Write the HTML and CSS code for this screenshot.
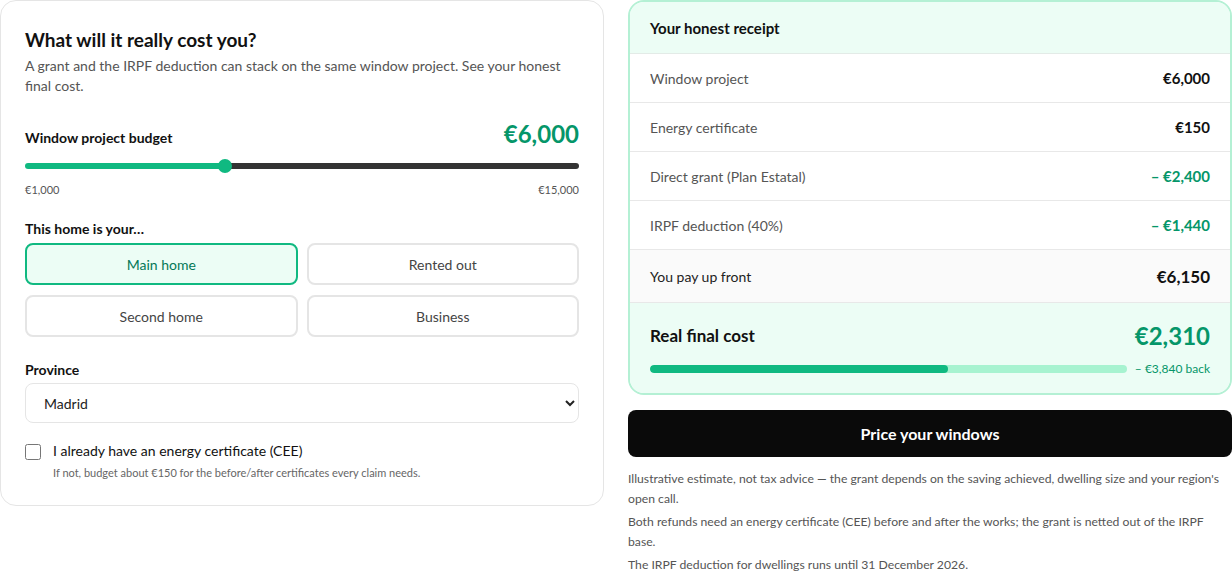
FILE: index.html
```html
<!DOCTYPE html>
<html lang="en">
<head>
    <meta charset="UTF-8">
    <meta name="viewport" content="width=device-width, initial-scale=1.0">
    <title>What will it really cost you?</title>
    <link rel="stylesheet" href="styles.css">
</head>
<body>
    <div class="calc">
        <div class="card inputs">
            <h2 class="title">What will it really cost you?</h2>
            <p class="intro">A grant and the IRPF deduction can stack on the same window project. See your honest final cost.</p>

            <div class="budget-row">
                <label for="budget" class="field-label">Window project budget</label>
                <span class="budget-value">€6,000</span>
            </div>
            <input id="budget" class="slider" type="range" min="1000" max="15000" step="100" value="6000"
                   style="background: linear-gradient(to right, #10b981 0%, #10b981 35.7%, #333 35.7%, #333 100%);">
            <div class="range-ends">
                <span>€1,000</span>
                <span>€15,000</span>
            </div>

            <p class="field-label spaced">This home is your…</p>
            <div class="options">
                <button class="option selected">Main home</button>
                <button class="option">Rented out</button>
                <button class="option">Second home</button>
                <button class="option">Business</button>
            </div>

            <label for="province" class="field-label province-label">Province</label>
            <select id="province" class="select">
                <option>Madrid</option>
                <option>Barcelona</option>
                <option>Valencia</option>
                <option>Sevilla</option>
            </select>

            <div class="check-row">
                <input id="cee" type="checkbox" class="check">
                <div>
                    <label for="cee" class="check-label">I already have an energy certificate (CEE)</label>
                    <p class="check-hint">If not, budget about €150 for the before/after certificates every claim needs.</p>
                </div>
            </div>
        </div>

        <div class="side">
            <div class="card receipt">
                <div class="receipt-head">Your honest receipt</div>
                <div class="line">
                    <span>Window project</span>
                    <span class="amount">€6,000</span>
                </div>
                <div class="line">
                    <span>Energy certificate</span>
                    <span class="amount">€150</span>
                </div>
                <div class="line">
                    <span>Direct grant (Plan Estatal)</span>
                    <span class="amount minus">– €2,400</span>
                </div>
                <div class="line">
                    <span>IRPF deduction (40%)</span>
                    <span class="amount minus">– €1,440</span>
                </div>
                <div class="line upfront">
                    <span>You pay up front</span>
                    <span class="amount">€6,150</span>
                </div>
                <div class="final">
                    <div class="final-row">
                        <span class="final-label">Real final cost</span>
                        <span class="final-value">€2,310</span>
                    </div>
                    <div class="back-row">
                        <div class="bar"><div class="bar-fill" style="width: 62.4%;"></div></div>
                        <span class="back">– €3,840 back</span>
                    </div>
                </div>
            </div>

            <button class="cta">Price your windows</button>

            <div class="notes">
                <p>Illustrative estimate, not tax advice — the grant depends on the saving achieved, dwelling size and your region's open call.</p>
                <p>Both refunds need an energy certificate (CEE) before and after the works; the grant is netted out of the IRPF base.</p>
                <p>The IRPF deduction for dwellings runs until 31 December 2026.</p>
            </div>
        </div>
    </div>
</body>
</html>
```

FILE: styles.css
```css
body {
    margin: 0;
    padding: 0;
    font-family: Lato, "Open Sans", sans-serif;
    color: #111;
    background-color: #fff;
}
.calc {
    display: grid;
    grid-template-columns: 1fr 1fr;
    gap: 24px;
    width: 1232px;
    align-items: start;
}
.card {
    border: 1px solid #e5e5e5;
    border-radius: 16px;
    background-color: #fff;
}
.inputs {
    padding: 24px 24px 24px;
}
.title {
    margin: 0 0 1px;
    font-size: 19px;
    line-height: 30px;
    font-weight: 700;
}
.intro {
    margin: 0;
    font-size: 14px;
    line-height: 20px;
    color: #555;
}
.field-label {
    font-size: 14px;
    line-height: 20px;
    font-weight: 700;
    color: #111;
    margin: 0;
}
.field-label.spaced {
    margin-top: 21px;
}
.province-label {
    display: block;
    margin-top: 23px;
}
.budget-row {
    display: flex;
    justify-content: space-between;
    align-items: baseline;
    margin-top: 22px;
    height: 32px;
}
.budget-value {
    font-size: 24px;
    line-height: 32px;
    font-weight: 700;
    color: #059669;
}
.slider {
    -webkit-appearance: none;
    appearance: none;
    display: block;
    width: 100%;
    height: 6px;
    margin: 13px 0 0;
    border-radius: 3px;
    outline: none;
}
.slider::-webkit-slider-thumb {
    -webkit-appearance: none;
    appearance: none;
    width: 14px;
    height: 14px;
    border-radius: 50%;
    background-color: #10b981;
    border: none;
    cursor: pointer;
}
.range-ends {
    display: flex;
    justify-content: space-between;
    margin-top: 13px;
    font-size: 11px;
    line-height: 16px;
    color: #555;
}
.options {
    display: grid;
    grid-template-columns: 1fr 1fr;
    column-gap: 9px;
    row-gap: 10px;
    margin-top: 4px;
}
.option {
    height: 42px;
    border: 2px solid #e5e5e5;
    border-radius: 8px;
    background-color: #fff;
    font-family: inherit;
    font-size: 14px;
    color: #444;
    cursor: pointer;
}
.option.selected {
    border-color: #10b981;
    background-color: #ecfdf5;
    color: #047857;
}
.select {
    display: block;
    width: 100%;
    height: 40px;
    margin-top: 3px;
    padding: 0 8px 0 14px;
    border: 1px solid #e5e5e5;
    border-radius: 8px;
    background-color: #fff;
    font-family: inherit;
    font-size: 14px;
    color: #222;
}
.check-row {
    display: flex;
    gap: 12px;
    margin-top: 18px;
}
.check {
    width: 16px;
    height: 16px;
    margin: 3px 0 0;
    flex-shrink: 0;
}
.check-label {
    display: block;
    font-size: 14px;
    line-height: 20px;
    color: #111;
}
.check-hint {
    margin: 4px 0 0;
    font-size: 11px;
    line-height: 16px;
    color: #666;
}
.receipt {
    border: 2px solid #b4f0d4;
    overflow: hidden;
}
.receipt-head {
    height: 51px;
    display: flex;
    align-items: center;
    padding: 0 20px;
    background-color: #ecfdf5;
    border-bottom: 1px solid #e3ebe7;
    font-size: 15px;
    font-weight: 700;
}
.line {
    display: flex;
    justify-content: space-between;
    align-items: center;
    height: 48px;
    padding: 0 20px;
    border-bottom: 1px solid #e8e8e8;
    font-size: 14px;
    color: #555;
}
.amount {
    font-size: 15px;
    font-weight: 700;
    color: #111;
}
.amount.minus {
    color: #059669;
}
.line.upfront {
    height: 52px;
    background-color: #fafafa;
    color: #222;
}
.line.upfront .amount {
    font-size: 17px;
}
.final {
    background-color: #ecfdf5;
    padding: 16px 20px 17px;
}
.final-row {
    display: flex;
    justify-content: space-between;
    align-items: center;
    height: 32px;
}
.final-label {
    font-size: 17px;
    font-weight: 700;
}
.final-value {
    font-size: 24px;
    font-weight: 700;
    color: #059669;
}
.back-row {
    display: flex;
    align-items: center;
    gap: 8px;
    margin-top: 10px;
}
.bar {
    flex: 1;
    height: 8px;
    border-radius: 4px;
    background-color: #a7f3d0;
    overflow: hidden;
}
.bar-fill {
    height: 100%;
    border-radius: 4px;
    background-color: #10b981;
}
.back {
    font-size: 12px;
    color: #059669;
}
.cta {
    display: block;
    width: 100%;
    height: 47px;
    margin-top: 15px;
    border: none;
    border-radius: 8px;
    background-color: #0a0a0a;
    color: #fff;
    font-family: inherit;
    font-size: 16px;
    font-weight: 700;
    cursor: pointer;
}
.notes {
    margin-top: 12px;
}
.notes p {
    margin: 0 0 3px;
    font-size: 12.2px;
    line-height: 20px;
    color: #555;
}
```
